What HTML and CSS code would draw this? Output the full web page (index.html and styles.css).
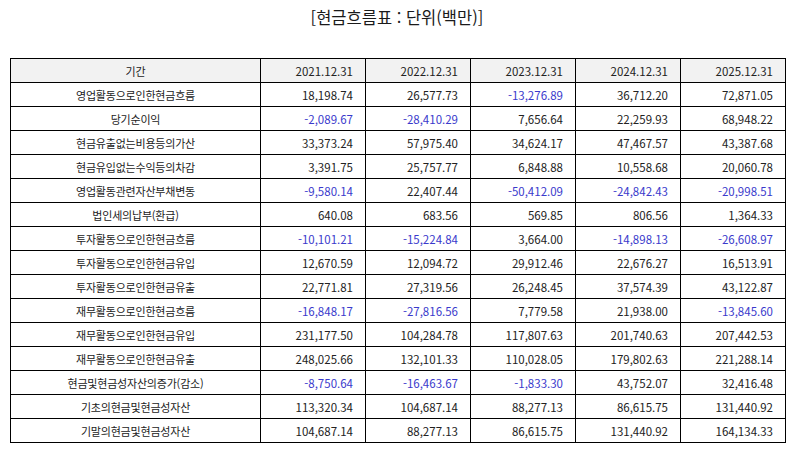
FILE: index.html
```html
<!DOCTYPE html>
<html lang="ko">
<head>
<meta charset="utf-8">
<link rel="stylesheet" href="styles.css">
</head>
<body>
<div class="page">
  <h1 class="title">[현금흐름표 : 단위(백만)]</h1>
  <table class="cf">
    <thead>
      <tr><th class="label">기간</th><th>2021.12.31</th><th>2022.12.31</th><th>2023.12.31</th><th>2024.12.31</th><th>2025.12.31</th></tr>
    </thead>
    <tbody>
      <tr><td class="label">영업활동으로인한현금흐름</td><td>18,198.74</td><td>26,577.73</td><td class="neg">-13,276.89</td><td>36,712.20</td><td>72,871.05</td></tr>
      <tr><td class="label">당기순이익</td><td class="neg">-2,089.67</td><td class="neg">-28,410.29</td><td>7,656.64</td><td>22,259.93</td><td>68,948.22</td></tr>
      <tr><td class="label">현금유출없는비용등의가산</td><td>33,373.24</td><td>57,975.40</td><td>34,624.17</td><td>47,467.57</td><td>43,387.68</td></tr>
      <tr><td class="label">현금유입없는수익등의차감</td><td>3,391.75</td><td>25,757.77</td><td>6,848.88</td><td>10,558.68</td><td>20,060.78</td></tr>
      <tr><td class="label">영업활동관련자산부채변동</td><td class="neg">-9,580.14</td><td>22,407.44</td><td class="neg">-50,412.09</td><td class="neg">-24,842.43</td><td class="neg">-20,998.51</td></tr>
      <tr><td class="label">법인세의납부(환급)</td><td>640.08</td><td>683.56</td><td>569.85</td><td>806.56</td><td>1,364.33</td></tr>
      <tr><td class="label">투자활동으로인한현금흐름</td><td class="neg">-10,101.21</td><td class="neg">-15,224.84</td><td>3,664.00</td><td class="neg">-14,898.13</td><td class="neg">-26,608.97</td></tr>
      <tr><td class="label">투자활동으로인한현금유입</td><td>12,670.59</td><td>12,094.72</td><td>29,912.46</td><td>22,676.27</td><td>16,513.91</td></tr>
      <tr><td class="label">투자활동으로인한현금유출</td><td>22,771.81</td><td>27,319.56</td><td>26,248.45</td><td>37,574.39</td><td>43,122.87</td></tr>
      <tr><td class="label">재무활동으로인한현금흐름</td><td class="neg">-16,848.17</td><td class="neg">-27,816.56</td><td>7,779.58</td><td>21,938.00</td><td class="neg">-13,845.60</td></tr>
      <tr><td class="label">재무활동으로인한현금유입</td><td>231,177.50</td><td>104,284.78</td><td>117,807.63</td><td>201,740.63</td><td>207,442.53</td></tr>
      <tr><td class="label">재무활동으로인한현금유출</td><td>248,025.66</td><td>132,101.33</td><td>110,028.05</td><td>179,802.63</td><td>221,288.14</td></tr>
      <tr><td class="label">현금및현금성자산의증가(감소)</td><td class="neg">-8,750.64</td><td class="neg">-16,463.67</td><td class="neg">-1,833.30</td><td>43,752.07</td><td>32,416.48</td></tr>
      <tr><td class="label">기초의현금및현금성자산</td><td>113,320.34</td><td>104,687.14</td><td>88,277.13</td><td>86,615.75</td><td>131,440.92</td></tr>
      <tr><td class="label">기말의현금및현금성자산</td><td>104,687.14</td><td>88,277.13</td><td>86,615.75</td><td>131,440.92</td><td>164,134.33</td></tr>
    </tbody>
  </table>
</div>
</body>
</html>
```

FILE: styles.css
```css
html, body {
  margin: 0;
  padding: 0;
  background: #ffffff;
}

.page {
  padding: 4px 10px 0 10px;
  font-family: "Noto Sans CJK KR", "Noto Sans", sans-serif;
  color: #222222;
}

.title {
  margin: 0;
  height: 54px;
  font-size: 16.5px;
  line-height: 26px;
  font-weight: normal;
  text-align: center;
  color: #1a1a1a;
}

.cf {
  width: 775px;
  border-collapse: collapse;
  table-layout: fixed;
}

.cf tr {
  height: 24px;
}

.cf th,
.cf td {
  border: 1px solid #000000;
  padding: 0 12px 0 4px;
  font-size: 11.5px;
  font-weight: normal;
  text-align: right;
  line-height: 22px;
  color: #222222;
  white-space: nowrap;
}

.cf th {
  box-sizing: border-box;
  background: #f2f2f2;
  width: 105px;
}

.cf th.label {
  width: 250px;
}

.cf .label {
  text-align: center;
  padding: 0;
  font-size: 11px;
  letter-spacing: -0.2px;
}

.cf td.neg {
  color: #3a3acc;
}
```
